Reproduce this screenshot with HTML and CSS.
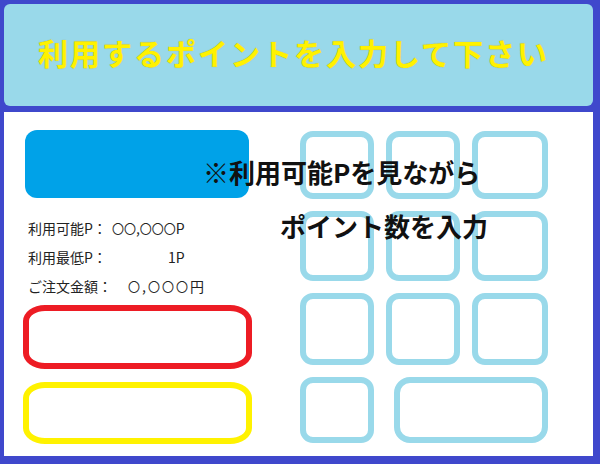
FILE: index.html
```html
<!DOCTYPE html>
<html lang="ja">
<head>
    <meta charset="UTF-8">
    <meta name="viewport" content="width=device-width, initial-scale=1.0">
    <title>ポイント入力</title>
    <link rel="stylesheet" href="styles.css">
</head>
<body>
    <div class="header">
        <h1 class="title">利用するポイントを入力して下さい</h1>
    </div>
    <div class="panel">
        <div class="side">
            <div class="display"></div>
            <ul class="info">
                <li>利用可能P：<span class="value v1"><span class="num">〇〇</span>,<span class="num">〇〇〇</span>P</span></li>
                <li>利用最低P：<span class="value v2">1P</span></li>
                <li>ご注文金額：<span class="value v3"><span class="num">〇</span>,<span class="num">〇〇〇</span>円</span></li>
            </ul>
            <div class="btn red"></div>
            <div class="btn yellow"></div>
        </div>
        <div class="keys">
            <div class="key"></div>
            <div class="key"></div>
            <div class="key"></div>
            <div class="key"></div>
            <div class="key"></div>
            <div class="key"></div>
            <div class="key"></div>
            <div class="key"></div>
            <div class="key"></div>
            <div class="key"></div>
            <div class="key wide"></div>
        </div>
        <!-- 注釈はテンキーの上に重ねる -->
        <div class="note">
            <p class="line1">※利用可能Pを見ながら</p>
            <p class="line2">ポイント数を入力</p>
        </div>
    </div>
</body>
</html>
```

FILE: styles.css
```css
* {
    box-sizing: border-box;
}
body {
    margin: 0;
    width: 600px;
    height: 464px;
    padding: 4px 7px 8px 4px;
    background-color: #3f48cc;
    font-family: "Noto Sans CJK JP", sans-serif;
    overflow: hidden;
}
.header {
    height: 102px;
    background-color: #99d9ea;
    border-radius: 6px;
    display: flex;
    align-items: center;
    padding: 0 0 6px 34px;
}
.title {
    margin: 0;
    font-size: 30px;
    font-weight: bold;
    letter-spacing: 2px;
    color: #fff200;
    text-shadow: 0 0 1px #a8a040;
}
.panel {
    position: relative;
    margin-top: 6px;
    height: 344px;
    background-color: #fff;
    display: flex;
    gap: 48px;
    padding: 18px 0 0 19px;
}
.side {
    width: 229px;
}
.display {
    margin-left: 2px;
    width: 224px;
    height: 68px;
    background-color: #00a2e8;
    border-radius: 12px;
}
.info {
    list-style: none;
    margin: 16px 0 0;
    padding: 0 0 0 5px;
    font-size: 14px;
    line-height: 29px;
    color: #222;
}
.num {
    font-size: 12px;
}
.v1 {
    margin-left: 5px;
}
.v2 {
    margin-left: 61px;
}
.v3 {
    margin-left: 16px;
    letter-spacing: 2px;
}
.btn {
    border: 6px solid;
    border-radius: 22px / 16px;
}
.red {
    margin-top: 4px;
    height: 64px;
    border-color: #ed1c24;
}
.yellow {
    margin-top: 13px;
    height: 62px;
    border-color: #fff200;
}
.keys {
    padding-top: 1px;
    display: grid;
    grid-template-columns: 74px 74px 76px;
    grid-template-rows: 68px 70px 72px 66px;
    column-gap: 12px;
    row-gap: 12px;
    align-content: start;
}
.key {
    border: 6px solid #99d9ea;
    border-radius: 13px;
}
.key.wide {
    grid-column: 2 / 4;
    margin-left: 8px;
    border-radius: 16px;
}
.note {
    position: absolute;
    left: 199px;
    top: 33px;
    font-size: 26px;
    font-weight: bold;
    color: #111;
}
.note p {
    margin: 0;
    line-height: 54px;
}
.line2 {
    margin-left: 77px !important;
}
```
